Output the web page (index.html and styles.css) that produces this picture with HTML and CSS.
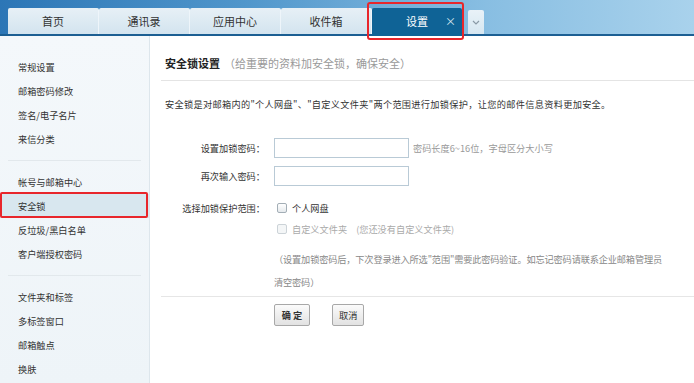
FILE: index.html
```html
<!DOCTYPE html>
<html lang="zh-CN">
<head>
    <meta charset="UTF-8">
    <title>设置 - 安全锁</title>
    <link rel="stylesheet" href="styles.css">
</head>
<body>
    <div class="topbar">
        <ul class="tabs">
            <li class="tab">首页</li>
            <li class="tab">通讯录</li>
            <li class="tab">应用中心</li>
            <li class="tab">收件箱</li>
            <li class="tab tab-active">设置<span class="tab-close">×</span></li>
            <li class="tab-more">
                <svg width="8" height="5" viewBox="0 0 8 5"><path d="M1 1l3 3 3-3" fill="none" stroke="#8a9aa6" stroke-width="1.2"/></svg>
            </li>
        </ul>
    </div>

    <div class="layout">
        <div class="sidebar">
            <ul class="menu">
                <li>常规设置</li>
                <li>邮箱密码修改</li>
                <li>签名/电子名片</li>
                <li>来信分类</li>
            </ul>
            <div class="menu-sep"></div>
            <ul class="menu">
                <li>帐号与邮箱中心</li>
                <li class="menu-active">安全锁</li>
                <li>反垃圾/黑白名单</li>
                <li>客户端授权密码</li>
            </ul>
            <div class="menu-sep"></div>
            <ul class="menu">
                <li>文件夹和标签</li>
                <li>多标签窗口</li>
                <li>邮箱触点</li>
                <li>换肤</li>
            </ul>
        </div>

        <div class="main">
            <div class="main-head">
                <span class="main-title">安全锁设置</span>
                <span class="main-sub">（给重要的资料加安全锁，确保安全）</span>
            </div>

            <p class="intro">安全锁是对邮箱内的"个人网盘"、"自定义文件夹"两个范围进行加锁保护，让您的邮件信息资料更加安全。</p>

            <div class="form">
                <div class="form-row">
                    <label class="form-label">设置加锁密码：</label>
                    <input type="password" class="form-input">
                    <span class="form-hint">密码长度6~16位，字母区分大小写</span>
                </div>
                <div class="form-row">
                    <label class="form-label">再次输入密码：</label>
                    <input type="password" class="form-input">
                </div>
                <div class="form-row form-row-check">
                    <label class="form-label">选择加锁保护范围：</label>
                    <label class="check"><input type="checkbox" class="check-box">个人网盘</label>
                </div>
                <div class="form-row form-row-check">
                    <span class="form-label"></span>
                    <label class="check check-disabled"><input type="checkbox" class="check-box" disabled>自定义文件夹</label>
                    <span class="check-note">(您还没有自定义文件夹)</span>
                </div>
                <p class="form-note">（设置加锁密码后，下次登录进入所选"范围"需要此密码验证。如忘记密码请联系企业邮箱管理员<br>清空密码）</p>
            </div>

            <div class="actions">
                <button class="btn btn-ok">确 定</button>
                <button class="btn">取消</button>
            </div>
        </div>
    </div>
</body>
</html>
```

FILE: styles.css
```css
* {
    box-sizing: border-box;
}
html, body {
    height: 100%;
}
body {
    margin: 0;
    font-family: "Noto Sans CJK SC", "Liberation Sans", sans-serif;
    font-size: 9.2px;
    color: #333;
    background: #fff;
    display: flex;
    flex-direction: column;
    overflow: hidden;
}
ul {
    list-style: none;
    margin: 0;
    padding: 0;
}

/* top tabs */
.topbar {
    height: 36px;
    padding: 8px 0 0 8px;
    background: linear-gradient(to right, #2c76b6 0%, #5096cb 35%, #88bee2 70%, #a9d2ec 100%);
    border-bottom: 2px solid #1c5f93;
}
.tabs {
    display: flex;
    align-items: flex-end;
    height: 26px;
}
.tab {
    width: 91px;
    height: 26px;
    line-height: 26px;
    text-align: center;
    font-size: 11px;
    color: #333;
    background: linear-gradient(#e7f0f6, #d3e4ef);
    border-right: 1px solid #eef5fa;
    border-radius: 2px 2px 0 0;
}
.tab-active {
    position: relative;
    width: 90px;
    height: 28px;
    margin-bottom: -2px;
    line-height: 27px;
    background: #0f6396;
    color: #fff;
    border-right: none;
}
.tab-active::after {
    content: "";
    position: absolute;
    left: -5px;
    right: -2px;
    top: -6px;
    bottom: -4px;
    border: 2px solid #e8262b;
    border-radius: 3px;
}
.tab-close {
    position: absolute;
    right: 6px;
    top: 0;
    font-size: 11px;
    color: #d8e6ef;
}
.tab-more {
    width: 16px;
    height: 24px;
    margin-left: 6px;
    background: linear-gradient(#e9f2f8, #d6e7f1);
    border-radius: 2px 2px 0 0;
    display: flex;
    align-items: center;
    justify-content: center;
}

/* body layout */
.layout {
    flex: 1;
    display: flex;
}
.sidebar {
    width: 150px;
    padding-top: 19px;
    background: linear-gradient(#f4f8fb, #eef4f8);
    border-right: 1px solid #dde6ec;
}
.menu li {
    position: relative;
    height: 24px;
    line-height: 24px;
    padding-left: 18px;
}
.menu .menu-active {
    background: #d8e7ef;
}
.menu-active::after {
    content: "";
    position: absolute;
    left: 0;
    right: 1px;
    top: -2px;
    bottom: 0;
    border: 2px solid #e8262b;
    border-radius: 2px;
}
.menu-sep {
    height: 1px;
    margin: 9px 8px;
    background: #e2e8ec;
}

.main {
    flex: 1;
}
.main-head {
    margin-left: 11px;
    padding: 20px 0 9px 4px;
    line-height: 14px;
    border-bottom: 1px solid #e4e4e4;
}
.main-title {
    font-size: 11px;
    font-weight: bold;
    color: #222;
}
.main-sub {
    font-size: 11px;
    color: #999;
    margin-left: 2px;
}
.intro {
    margin: 15px 0 0 15px;
    line-height: 16px;
    letter-spacing: 0.3px;
}

.form {
    margin: 26px 0 0 15px;
}
.form-row {
    display: flex;
    align-items: center;
    height: 20px;
    margin-bottom: 8px;
}
.form-row-check {
    height: 20px;
    margin-bottom: 1px;
}
.form-row-check:nth-child(3) {
    margin-top: 12px;
}
.form-label {
    width: 100px;
    margin-right: 9px;
    text-align: right;
}
.form-input {
    width: 135px;
    height: 20px;
    border: 1px solid #b9cad6;
    padding: 0 4px;
    font-size: 12px;
}
.form-hint {
    margin-left: 4px;
    color: #999;
}
.check {
    display: flex;
    align-items: center;
}
.check-box {
    appearance: none;
    width: 10px;
    height: 10px;
    margin: 0 5px 0 3px;
    border: 1px solid #a3aeb6;
    border-radius: 2px;
    background: linear-gradient(#fff, #e6eaed);
}
.check-disabled {
    color: #aaa;
}
.check-disabled .check-box {
    border-color: #ccd3d8;
    background: #f4f6f7;
}
.check-note {
    margin-left: 9px;
    color: #aaa;
}
.form-note {
    margin: 9px 0 0 109px;
    line-height: 23px;
    color: #888;
    letter-spacing: -0.15px;
}

.actions {
    margin: 2px 0 0 11px;
    padding: 7px 0 0 113px;
    border-top: 1px solid #e6e6e6;
    display: flex;
    gap: 22px;
}
.btn {
    height: 22px;
    padding: 0 6px;
    font-family: inherit;
    font-size: 9.2px;
    color: #333;
    background: linear-gradient(#fbfbfb, #e2e2e2);
    border: 1px solid #a8a8a8;
    border-radius: 2px;
}
.btn-ok {
    width: 36px;
    font-weight: bold;
}
```
